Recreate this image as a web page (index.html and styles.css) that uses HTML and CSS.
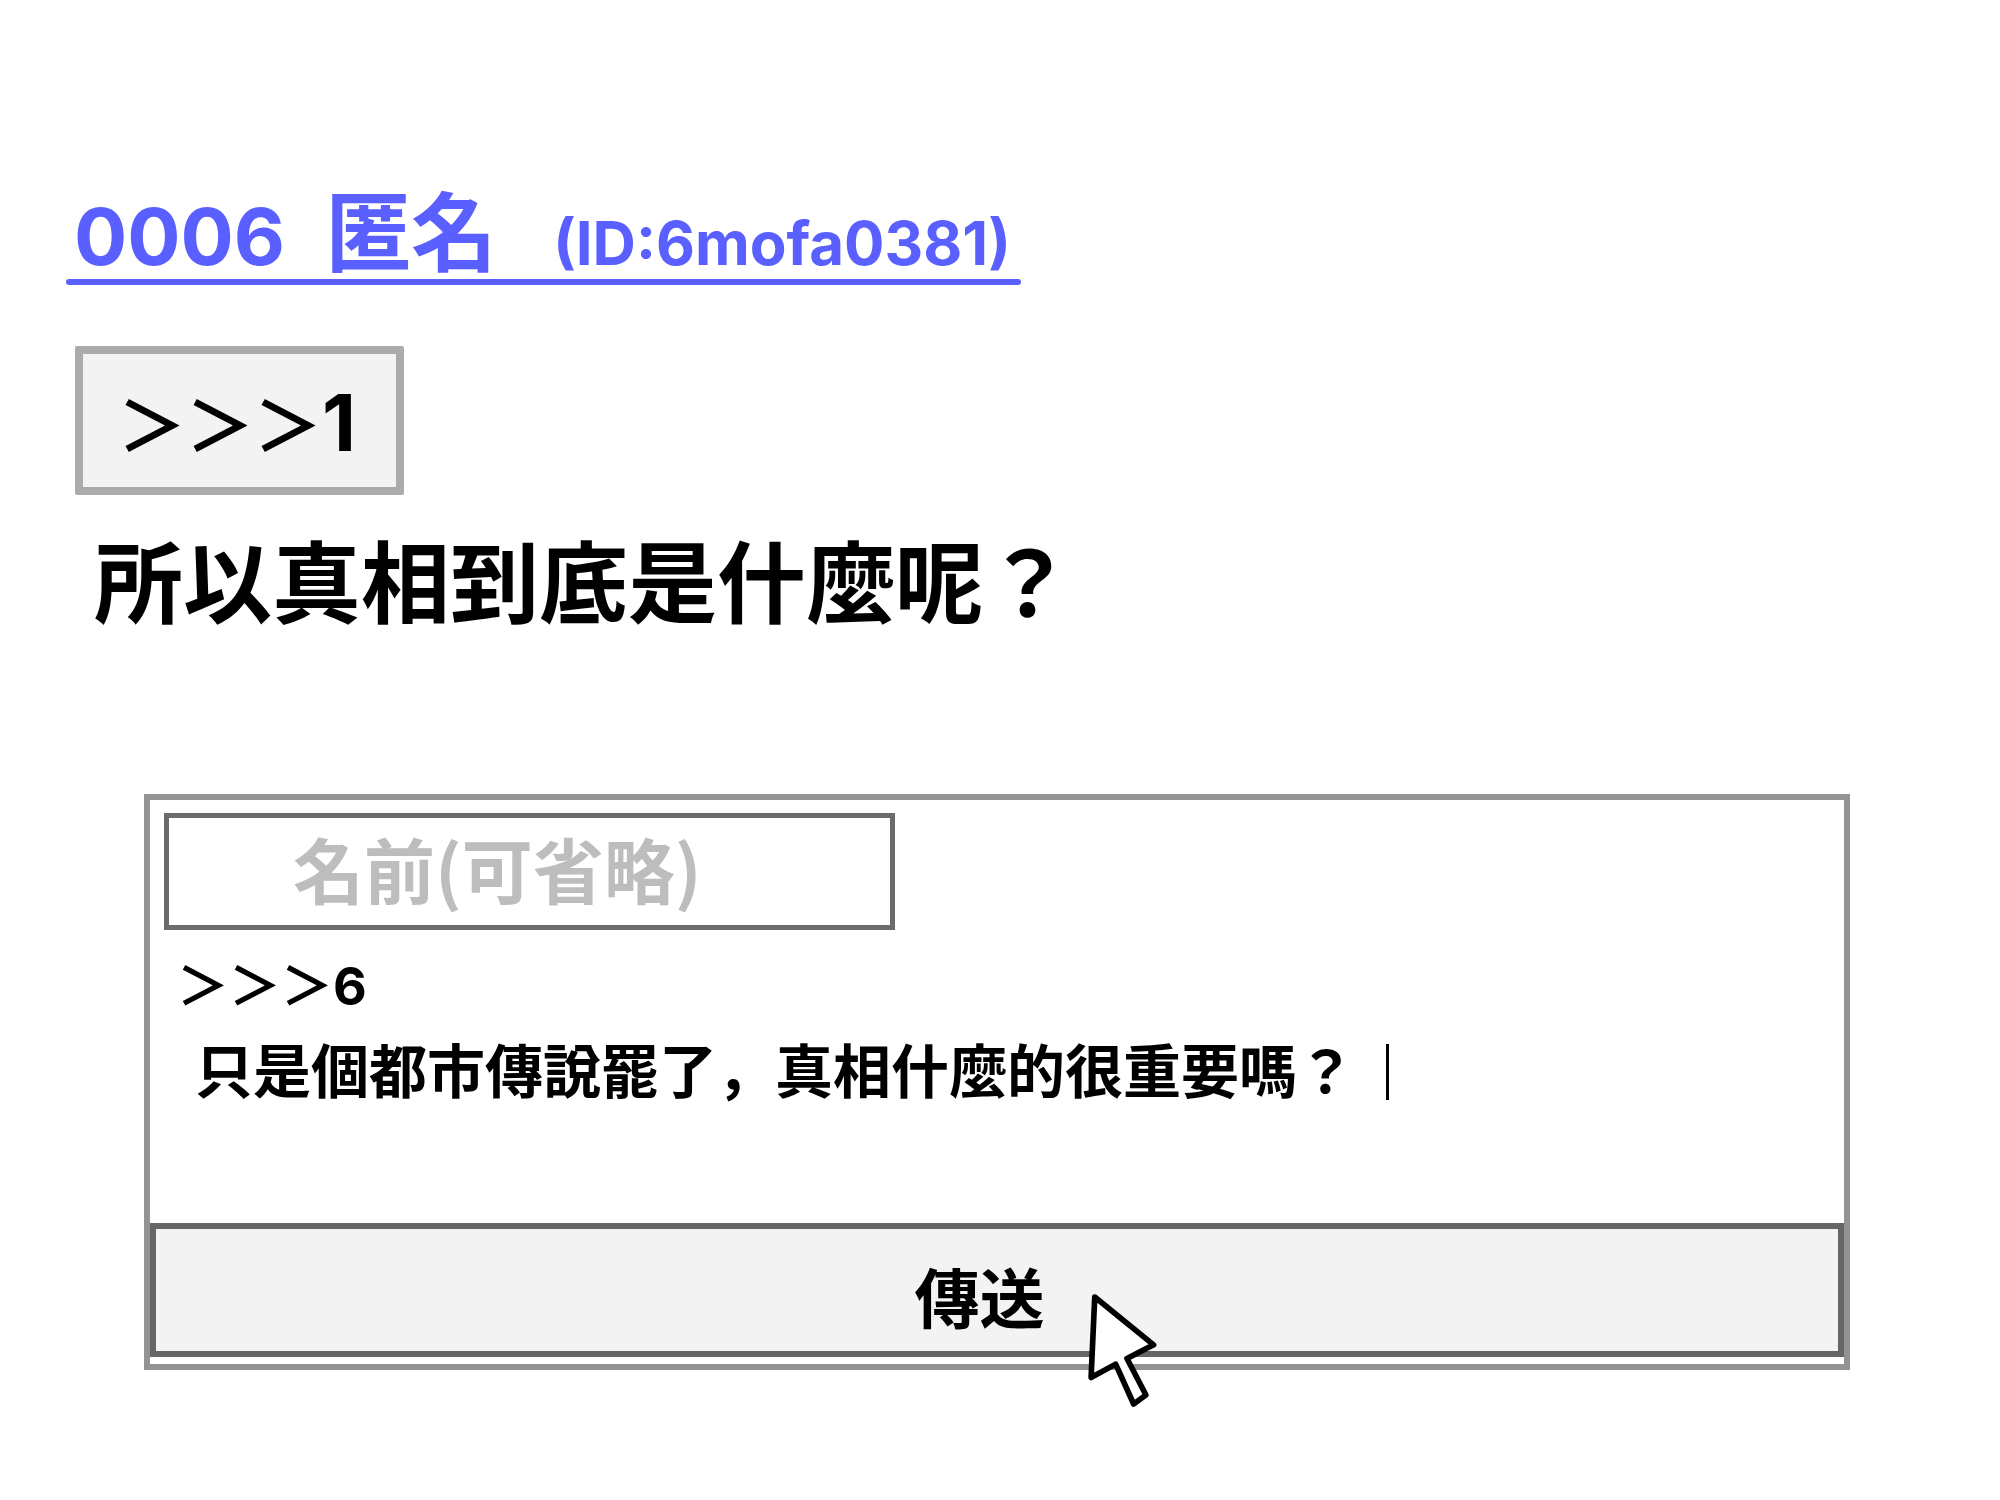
FILE: index.html
```html
<!DOCTYPE html>
<html lang="ja">
<head>
<meta charset="utf-8">
<meta name="viewport" content="width=device-width, initial-scale=1">
<title>0006 匿名</title>
<link rel="stylesheet" href="styles.css">
</head>
<body>
<main class="thread">
  <article class="post">
    <h1 class="post-head"><a class="post-link" href="#post-6"><span class="post-number">0006</span><span>匿名</span><span class="post-id">(ID:6mofa0381)</span></a></h1>
    <a class="quote" href="#post-1">＞＞＞<span class="quote-number">1</span></a>
    <p class="post-text">所以真相到底是什麼呢？</p>
  </article>
  <form class="reply">
    <input class="name" type="text" aria-label="名前" placeholder="名前(可省略)">
    <input class="reply-to" type="text" aria-label="回覆對象" value="＞＞＞6">
    <div class="message-wrap">
      <textarea class="message" aria-label="內容" rows="1">只是個都市傳說罷了，真相什麼的很重要嗎？</textarea>
      <span class="caret"></span>
    </div>
    <div class="send-wrap">
      <button class="send" type="button">傳送</button>
      <svg class="pointer" viewBox="620 240 216 352" aria-hidden="true"><path d="M643 258L820 402L740 443L797 553L760 580L706 460L632 500Z"/></svg>
    </div>
  </form>
</main>
</body>
</html>
```
FILE: styles.css
```css
* { box-sizing: border-box; }

body {
  margin: 0;
  background: #fff;
  color: #000;
  font-family: Inter, "Noto Sans CJK JP", sans-serif;
  font-weight: 700;
}

.thread { padding: 188px 150px 132px 66px; }

.post {
  display: flex;
  flex-direction: column;
  align-items: flex-start;
}

.post-head {
  margin: 0;
  font-size: 86px;
  line-height: 92px;
}

.post-link {
  display: flex;
  align-items: baseline;
  gap: 40px;
  padding: 0 10px 0 8px;
  color: #5960ff;
  text-decoration: none;
  position: relative;
}

.post-link::after {
  content: "";
  position: absolute;
  left: 0;
  right: 0;
  bottom: 4px;
  height: 6px;
  border-radius: 3px;
  background: #5960ff;
}

.post-number { font-size: 79px; }

.post-id {
  margin-left: 16px;
  font-size: 60px;
}

.quote {
  margin: 57px 0 0 9px;
  padding: 28px 40px 17px 35px;
  border: 8px solid #ababab;
  border-radius: 2px;
  background: #f3f3f3;
  color: #000;
  font-size: 68px;
  line-height: 88px;
  text-decoration: none;
}

.quote-number {
  font-size: 79px;
  line-height: 1;
}

.post-text {
  margin: 39px 0 0 28px;
  font-size: 89px;
  line-height: 100px;
}

.reply {
  margin: 160px 0 0 78px;
  padding: 13px 0 7px;
  border: 6px solid #939393;
  display: flex;
  flex-direction: column;
}

.name, .reply-to, .message, .send {
  font: inherit;
  color: #000;
  border: 0;
  border-radius: 0;
  outline: 0;
}

.name {
  width: calc(43% + 3px);
  height: 117px;
  margin-left: 14px;
  padding: 0 0 10px 124px;
  border: 5px solid #6b6b6b;
  background: #fff;
  font-family: "Noto Sans CJK JP", sans-serif;
  font-size: 71px;
  line-height: 90px;
}

.name::placeholder { color: #bdbdbd; opacity: 1; }

.reply-to {
  height: 80px;
  margin: 12px 0 6px 27px;
  padding: 0;
  background: transparent;
  font-size: 52px;
}

.message-wrap { position: relative; }

.message {
  display: block;
  width: 100%;
  height: 195px;
  padding: 0 0 0 45px;
  background: transparent;
  font-size: 58px;
  line-height: 88px;
  resize: none;
  overflow: hidden;
}

.caret {
  position: absolute;
  left: 1236px;
  top: 16px;
  width: 3px;
  height: 56px;
  background: #000;
}

.send-wrap { position: relative; }

.send {
  display: block;
  width: 100%;
  height: 134px;
  padding: 19px 35px 0 0;
  border: 6px solid #666;
  background: #f3f3f3;
  font-size: 65px;
  line-height: 80px;
}

.pointer {
  position: absolute;
  left: calc(50% + 90px);
  top: 68px;
  width: 72px;
  height: 117px;
  fill: #fff;
  stroke: #000;
  stroke-width: 17;
  stroke-linejoin: round;
}
```
